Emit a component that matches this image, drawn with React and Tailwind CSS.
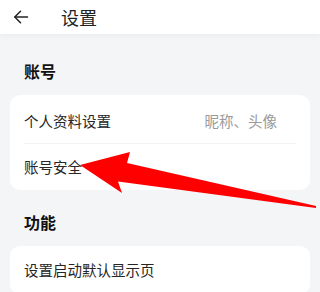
const Row = ({ label, value, height }) => (
  <div className={`flex items-center justify-between pl-[14px] pr-[33px] ${height}`}>
    <span className="text-[14.5px] text-[#262626]">{label}</span>
    {value && <span className="text-[14.5px] text-[#9a9a9a]">{value}</span>}
  </div>
);

const App = () => {
  return (
    <div
      className="relative h-[292px] w-[320px] overflow-hidden bg-[#f4f5f7]"
      style={{ fontFamily: '"Noto Sans CJK SC", "Noto Sans", sans-serif' }}
    >
      <header className="flex h-[34px] items-center bg-white pl-[13px] shadow-[0_3px_6px_rgba(0,0,0,0.03)]">
        <svg width="16" height="16" viewBox="0 0 16 16" fill="none" stroke="#222" strokeWidth="1.5" strokeLinecap="round" strokeLinejoin="round">
          <path d="M14.5 8H1.8" />
          <path d="M7.5 2.3L1.8 8l5.7 5.7" />
        </svg>
        <h1 className="ml-[32px] text-[18px] leading-none text-[#222]">设置</h1>
      </header>

      <h2 className="mt-[26px] px-[24px] text-[16px] font-bold leading-[22px] text-[#111]">账号</h2>
      <div className="mx-[10px] mt-[13px] rounded-[10px] bg-white">
        <Row label="个人资料设置" value="昵称、头像" height="h-[48px] pt-[4px]" />
        <div className="mx-[14px] h-px bg-[#f3f3f3]" />
        <Row label="账号安全" height="h-[46px]" />
      </div>

      <h2 className="mt-[21px] px-[24px] text-[16px] font-bold leading-[22px] text-[#111]">功能</h2>
      <div className="mx-[10px] mt-[13px] rounded-[10px] bg-white">
        <Row label="设置启动默认显示页" height="h-[48px]" />
      </div>

      {/* annotation arrow */}
      <svg className="pointer-events-none absolute left-0 top-0" width="320" height="292" viewBox="0 0 320 292">
        <polygon
          points="80,165 130,152 127,163 316,206 316,208 118,181.5 122,193"
          fill="#fe0000"
        />
      </svg>
    </div>
  );
};

export default App;
